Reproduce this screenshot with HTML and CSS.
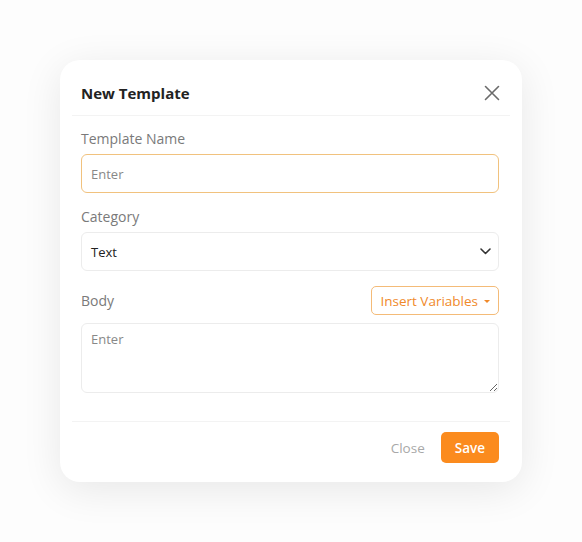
FILE: index.html
```html
<!DOCTYPE html>
<html lang="en">
<head>
    <meta charset="UTF-8">
    <meta name="viewport" content="width=device-width, initial-scale=1.0">
    <title>New Template</title>
    <link rel="stylesheet" href="styles.css">
</head>
<body>
    <div class="modal">
        <div class="modal-header">
            <h3>New Template</h3>
            <button class="close-x" aria-label="Close">
                <svg width="16" height="16" viewBox="0 0 16 16"><path d="M1.5 1.5 L14.5 14.5 M14.5 1.5 L1.5 14.5" stroke="#6b6b6b" stroke-width="1.6" stroke-linecap="round"/></svg>
            </button>
        </div>
        <div class="divider"></div>
        <div class="modal-body">
            <label class="field-label">Template Name</label>
            <input type="text" class="field field-active" placeholder="Enter">

            <label class="field-label">Category</label>
            <div class="field select">
                <span>Text</span>
                <svg width="11" height="7" viewBox="0 0 11 7"><path d="M1 1 L5.5 5.5 L10 1" fill="none" stroke="#333" stroke-width="1.6" stroke-linecap="round" stroke-linejoin="round"/></svg>
            </div>

            <div class="body-row">
                <label class="field-label">Body</label>
                <button class="insert-btn">Insert Variables <span class="caret"></span></button>
            </div>
            <textarea class="field area" placeholder="Enter"></textarea>
        </div>
        <div class="divider"></div>
        <div class="modal-footer">
            <button class="btn-close">Close</button>
            <button class="btn-save">Save</button>
        </div>
    </div>
</body>
</html>
```

FILE: styles.css
```css
body {
    font-family: "Open Sans", Arial, sans-serif;
    margin: 0;
    padding: 60px;
    background-color: #fdfdfd;
}

.modal {
    width: 462px;
    background-color: #fff;
    border-radius: 20px;
    box-shadow: 0 8px 40px rgba(0, 0, 0, 0.09);
}

.modal-header {
    display: flex;
    align-items: center;
    justify-content: space-between;
    padding: 23px 21px 12px 21px;
}

.modal-header h3 {
    margin: 0;
    font-size: 15px;
    line-height: 20px;
    font-weight: 700;
    color: #222;
}

.close-x {
    border: none;
    background: none;
    padding: 0;
    width: 16px;
    height: 16px;
    margin-right: 1px;
    display: flex;
}

.divider {
    height: 1px;
    margin: 0 12px;
    background-color: #f3f3f3;
}

.modal-body {
    display: flex;
    flex-direction: column;
    padding: 13px 23px 28px 21px;
}

.field-label {
    font-size: 14px;
    line-height: 20px;
    color: #7a7a7a;
    margin-bottom: 5px;
}

.field {
    box-sizing: border-box;
    width: 100%;
    height: 39px;
    border: 1px solid #ececec;
    border-radius: 6px;
    padding: 0 9px;
    font-family: inherit;
    font-size: 13px;
    color: #222;
    background: #fff;
    margin-bottom: 14px;
    outline: none;
}

.field::placeholder {
    color: #888;
}

.field-active {
    border-color: #f1c27e;
}

.select {
    display: flex;
    align-items: center;
    justify-content: space-between;
    padding-right: 7px;
    margin-bottom: 15px;
}

.body-row {
    display: flex;
    align-items: center;
    justify-content: space-between;
    margin-bottom: 8px;
}

.body-row .field-label {
    margin-bottom: 0;
}

.insert-btn {
    height: 29px;
    padding: 0 8px;
    border: 1px solid #f4bb78;
    border-radius: 5px;
    background: #fff;
    color: #f0892a;
    font-family: inherit;
    font-size: 13.5px;
    display: flex;
    align-items: center;
    gap: 6px;
}

.caret {
    width: 0;
    height: 0;
    border-left: 3px solid transparent;
    border-right: 3px solid transparent;
    border-top: 3px solid #f0892a;
    margin-top: 1px;
}

.area {
    height: 70px;
    padding: 6px 9px;
    margin-bottom: 0;
    resize: vertical;
}

.modal-footer {
    display: flex;
    justify-content: flex-end;
    align-items: center;
    gap: 16px;
    padding: 10px 23px 19px 21px;
}

.btn-close {
    border: none;
    background: none;
    padding: 0;
    font-family: inherit;
    font-size: 13.5px;
    color: #a8a8a8;
}

.btn-save {
    height: 31px;
    padding: 0 14px;
    border: none;
    border-radius: 5px;
    background-color: #fb8b1e;
    color: #fff;
    font-family: inherit;
    font-size: 13.5px;
    font-weight: 600;
}
```
